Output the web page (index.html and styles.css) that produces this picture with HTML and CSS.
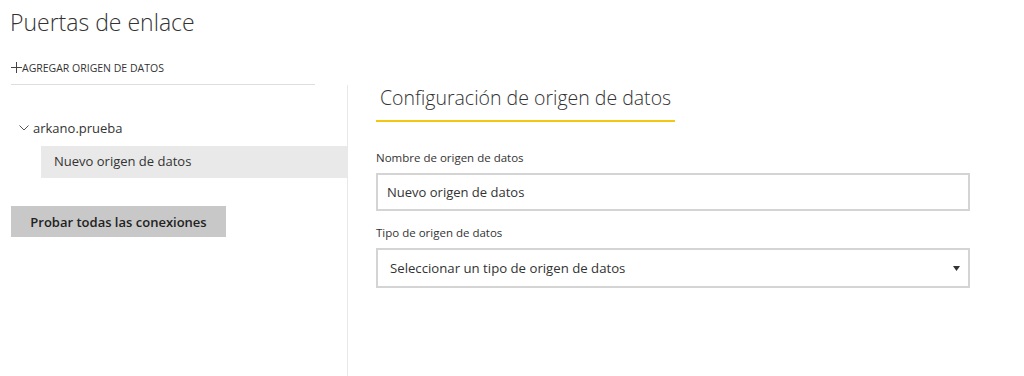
FILE: index.html
```html
<!DOCTYPE html>
<html>
<head>
    <title>Puertas de enlace</title>
    <link rel="stylesheet" href="styles.css">
</head>
<body>
    <h1 class="page-title">Puertas de enlace</h1>
    <div class="add-row">
        <svg class="plus" width="11" height="11" viewBox="0 0 11 11"><path d="M5.5 0 V11 M0 5.5 H11" stroke="#444" stroke-width="1"/></svg>
        <span class="add-text">AGREGAR ORIGEN DE DATOS</span>
    </div>
    <div class="layout">
        <div class="sidebar">
            <div class="tree">
                <div class="gateway">
                    <svg class="chevron" width="10" height="6" viewBox="0 0 10 6"><path d="M0.5 0.5 L5 5 L9.5 0.5" fill="none" stroke="#555" stroke-width="1"/></svg>
                    <span>arkano.prueba</span>
                </div>
                <div class="source selected">Nuevo origen de datos</div>
            </div>
            <button class="test-btn">Probar todas las conexiones</button>
        </div>
        <div class="main">
            <h2 class="section-title">Configuración de origen de datos</h2>
            <div class="field">
                <label class="field-label">Nombre de origen de datos</label>
                <div class="input">Nuevo origen de datos</div>
            </div>
            <div class="field">
                <label class="field-label">Tipo de origen de datos</label>
                <div class="input select">
                    <span>Seleccionar un tipo de origen de datos</span>
                    <svg class="arrow" width="7" height="5" viewBox="0 0 7 5"><path d="M0 0 H7 L3.5 5 Z" fill="#333"/></svg>
                </div>
            </div>
        </div>
    </div>
</body>
</html>
```

FILE: styles.css
```css
body {
    margin: 0;
    padding: 0;
    font-family: "Open Sans", "Noto Sans", sans-serif;
    color: #333;
    background: #fff;
    height: 376px;
    overflow: hidden;
}

.page-title {
    margin: 0;
    padding: 6px 0 0 10px;
    height: 34px;
    font-size: 23px;
    font-weight: 300;
    color: #333;
}

/* add data source link */
.add-row {
    margin-left: 11px;
    width: 304px;
    height: 45px;
    box-sizing: border-box;
    padding-bottom: 9px;
    border-bottom: 1px solid #ddd;
    display: flex;
    align-items: flex-end;
}

.plus {
    margin-bottom: 2px;
}

.add-text {
    font-size: 10.5px;
    line-height: 14px;
    color: #333;
}

.layout {
    display: flex;
    height: 291px;
}

.sidebar {
    width: 336px;
    padding-left: 11px;
    border-right: 1px solid #e8e8e8;
}

.tree {
    padding-top: 34px;
}

.gateway {
    display: flex;
    align-items: center;
    gap: 4px;
    padding-left: 8px;
    height: 18px;
    font-size: 13px;
    color: #333;
}

.source {
    margin-top: 9px;
    margin-left: 30px;
    height: 32px;
    line-height: 31px;
    padding-left: 13px;
    font-size: 13px;
    color: #333;
}

.source.selected {
    background-color: #e9e9e9;
}

.test-btn {
    margin-top: 28px;
    width: 215px;
    height: 31px;
    border: none;
    background-color: #c8c8c8;
    font-family: "Open Sans", "Noto Sans", sans-serif;
    font-weight: 600;
    font-size: 13px;
    color: #222;
    padding: 0;
}

.main {
    padding-left: 28px;
    flex: 1;
}

.section-title {
    display: inline-block;
    margin: 0;
    padding: 0 4px 9px 4px;
    line-height: 26px;
    font-size: 19.5px;
    font-weight: 300;
    color: #333;
    border-bottom: 2px solid #f2c811;
}

.field {
    margin-top: 28px;
    width: 594px;
}

.field + .field {
    margin-top: 14px;
}

.field-label {
    display: block;
    font-size: 11.5px;
    line-height: 16px;
    color: #333;
    margin-bottom: 7px;
}

.input {
    height: 38px;
    box-sizing: border-box;
    border: 2px solid #d4d4d4;
    padding-left: 9px;
    display: flex;
    align-items: center;
    font-size: 13px;
    color: #333;
}

.select {
    height: 40px;
    justify-content: space-between;
    padding-right: 8px;
    padding-left: 12px;
    font-size: 13.2px;
}
```
